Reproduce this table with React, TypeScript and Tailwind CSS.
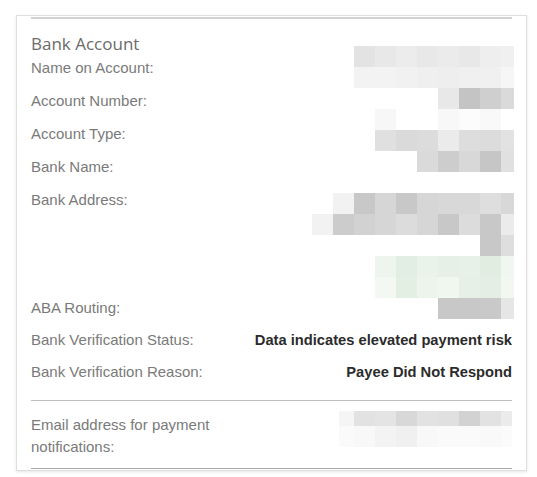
type Cell = [number, number, number, string];

// redacted values: pixelated blocks (x, y, width, colour), row height 21
const w = (x: number) => (x === 501 ? 13 : 21);

const mosaicRows: { y: number; cells: [number, string][] }[] = [
  { y: 46, cells: [[354, "#e3e3e3"], [375, "#e8e8e8"], [396, "#ececec"], [417, "#e8e8e8"], [438, "#ebebeb"], [459, "#e8e8e8"], [480, "#eeeeee"], [501, "#f0f0f0"]] },
  { y: 67, cells: [[354, "#f3f3f3"], [375, "#f3f3f3"], [396, "#f1f1f1"], [417, "#efefef"], [438, "#eeeeee"], [459, "#f0f0f0"], [480, "#f0f0f0"], [501, "#f6f6f6"]] },
  { y: 88, cells: [[438, "#e8e8e8"], [459, "#c4c4c4"], [480, "#cfcfcf"], [501, "#dadada"]] },
  { y: 109, cells: [[375, "#f7f7f7"], [438, "#f8f8f8"], [459, "#fcfcfc"], [480, "#f9f9f9"]] },
  { y: 130, cells: [[375, "#e0e0e0"], [396, "#dadada"], [417, "#dcdcdc"], [438, "#ebebeb"], [459, "#dddddd"], [480, "#dcdcdc"], [501, "#e2e2e2"]] },
  { y: 151, cells: [[417, "#dadada"], [438, "#cdcdcd"], [459, "#d8d8d8"], [480, "#c6c6c6"], [501, "#e0e0e0"]] },
  { y: 193, cells: [[333, "#f2f2f2"], [354, "#c8c8c8"], [375, "#d6d6d6"], [396, "#c8c8c8"], [417, "#d6d6d6"], [438, "#d8d8d8"], [459, "#d8d8d8"], [480, "#dedede"], [501, "#d8d8d8"]] },
  { y: 214, cells: [[312, "#f2f2f2"], [333, "#cccccc"], [354, "#d2d2d2"], [375, "#d6d6d6"], [396, "#dcdcdc"], [417, "#d6d6d6"], [438, "#c8c8c8"], [459, "#dcdcdc"], [480, "#c8c8c8"], [501, "#ebebeb"]] },
  { y: 235, cells: [[480, "#c8c8c8"], [501, "#dedede"]] },
  { y: 256, cells: [[375, "#eef5ef"], [396, "#e2ede3"], [417, "#eaf3ea"], [438, "#e6f0e6"], [459, "#e8f1e8"], [480, "#e2ede2"], [501, "#f0f6f0"]] },
  { y: 277, cells: [[375, "#f3f8f3"], [396, "#e4efe4"], [417, "#ecf4ec"], [438, "#f0f6f0"], [459, "#e6f0e6"], [480, "#e4eee4"], [501, "#f2f7f2"]] },
  { y: 298, cells: [[438, "#c8c8c8"], [459, "#c8c8c8"], [480, "#c9c9c9"], [501, "#e6e6e6"]] },
];

const emailCells: Cell[] = [
  [339, 411, 15, "#f5f5f5"], [354, 411, 21, "#e2e2e2"], [375, 411, 21, "#e4e4e4"], [396, 411, 21, "#d8d8d8"],
  [417, 411, 21, "#e2e2e2"], [438, 411, 21, "#e0e0e0"], [459, 411, 21, "#d2d2d2"], [480, 411, 21, "#e2e2e2"], [501, 411, 11, "#ebebeb"],
  [339, 426, 15, "#fafafa"], [354, 426, 21, "#f8f8f8"], [375, 426, 21, "#f3f3f3"], [396, 426, 21, "#f0f0f0"],
  [417, 426, 21, "#f8f8f8"], [438, 426, 21, "#fafafa"], [459, 426, 21, "#fafafa"], [480, 426, 21, "#f9f9f9"], [501, 426, 11, "#fbfbfb"],
];

const Row = ({ label, value, className = "" }: { label: string; value?: string; className?: string }) => (
  <div className={`flex justify-between items-start leading-[20px] ${className}`}>
    <span className="text-[15px] text-[#7a7a7a]">{label}</span>
    {value && <span className="text-[14.7px] font-bold text-[#2b2b2b]">{value}</span>}
  </div>
);

export default function App() {
  return (
    <div className="relative w-[537px] h-[477px] bg-white pt-[15px] pl-[16px]" style={{ fontFamily: '"Liberation Sans", Arial, sans-serif' }}>
      <div className="w-[511px] border border-[#dedede] bg-white px-[14px] pb-[1px] shadow-[0_1px_3px_rgba(0,0,0,0.10)]">
        <div className="mt-[1px] h-[2px] bg-[#d2d2d2]" />
        <h2
          className="mt-[14px] text-[17px] leading-[22px] text-[#6b6b6b]"
          style={{ fontFamily: '"Open Sans", sans-serif' }}
        >
          Bank Account
        </h2>
        <Row label="Name on Account:" className="mt-[3px]" />
        <Row label="Account Number:" className="mt-[13px]" />
        <Row label="Account Type:" className="mt-[13px]" />
        <Row label="Bank Name:" className="mt-[13px]" />
        <div className="mt-[13px] flex justify-between h-[95px] leading-[20px]">
          <span className="text-[15px] text-[#7a7a7a]">Bank Address:</span>
        </div>
        <Row label="ABA Routing:" className="mt-[13px]" />
        <Row label="Bank Verification Status:" value="Data indicates elevated payment risk" className="mt-[12px]" />
        <Row label="Bank Verification Reason:" value="Payee Did Not Respond" className="mt-[12px]" />
        <div className="mt-[18px] h-px bg-[#bdbdbd]" />
        <div className="mt-[13px] flex justify-between">
          <span className="w-[200px] text-[15px] leading-[22px] text-[#7a7a7a]">
            Email address for payment notifications:
          </span>
        </div>
        <div className="mt-[10px] h-px bg-[#a9a9a9]" />
      </div>

      {/* pixelated redaction over the account values */}
      <svg className="pointer-events-none absolute left-0 top-0" width="537" height="477" shapeRendering="crispEdges">
        {mosaicRows.map((r) =>
          r.cells.map(([x, c]) => <rect key={`${x}-${r.y}`} x={x} y={r.y} width={w(x)} height={21} fill={c} />)
        )}
        {emailCells.map(([x, y, cw, c]) => (
          <rect key={`e${x}-${y}`} x={x} y={y} width={cw} height={y === 411 ? 15 : 21} fill={c} />
        ))}
      </svg>
    </div>
  );
}
